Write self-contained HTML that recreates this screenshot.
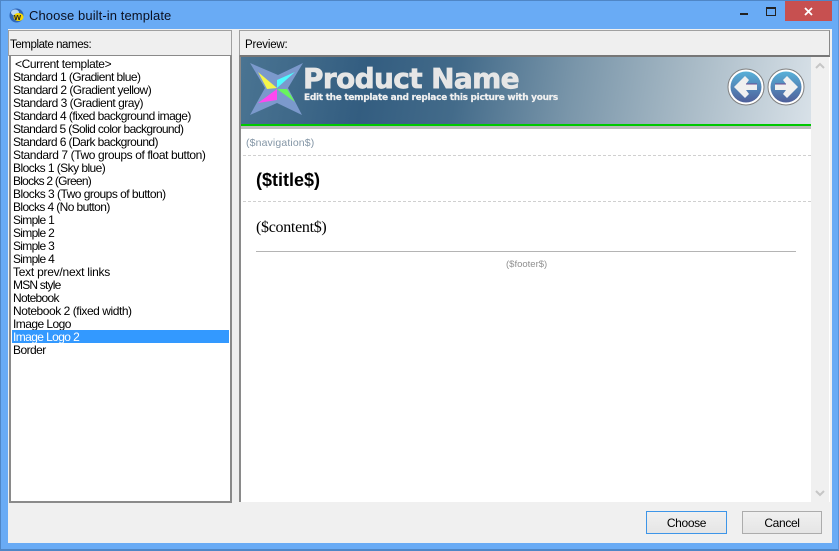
<!DOCTYPE html>
<html><head><meta charset="utf-8"><style>
html,body{margin:0;padding:0}
body{width:839px;height:551px;position:relative;overflow:hidden;background:#69abf5;font-family:"Liberation Sans",sans-serif;font-size:12px;color:#000}
div{position:absolute;box-sizing:border-box}
.t{white-space:nowrap}
#win{left:0;top:0;width:839px;height:551px;border:1px solid #4f86c6;border-bottom:2px solid #4f86c6;border-right:1px solid #5a94d8}
#list div{left:1px;width:217px;height:13px;line-height:13px;padding-left:1px;white-space:nowrap;letter-spacing:-.45px}
.btn{top:511px;height:23px;text-align:center;line-height:22px;background:linear-gradient(#f0f0f0,#e5e5e5);border:1px solid #acacac;letter-spacing:-.35px}
</style></head><body>
<div id="win"></div>
<svg style="position:absolute;left:9px;top:8px" width="15" height="15" viewBox="0 0 15 15"><circle cx="7.5" cy="7.5" r="7" fill="#2f66b8"/><ellipse cx="6" cy="4.5" rx="4" ry="3" fill="#bcd8f2"/><ellipse cx="9.5" cy="9" rx="5" ry="4" fill="#f6d800"/><text x="5" y="12" font-size="9" font-weight="bold" font-family="Liberation Sans" fill="#222">w</text></svg>
<div class="t" style="left:29px;top:8px;font-size:13px;line-height:15px;color:#0b1020;letter-spacing:.09px">Choose built-in template</div>
<div style="left:740px;top:13px;width:8px;height:2px;background:#222"></div>
<div style="left:766px;top:7px;width:10px;height:9px;border:1px solid #222;border-top:2px solid #222"></div>
<div style="left:785px;top:1px;width:47px;height:20px;background:#c75050"></div>
<svg style="position:absolute;left:804px;top:7px" width="9" height="9" viewBox="0 0 9 9"><path d="M1 1L8 8M8 1L1 8" stroke="#fff" stroke-width="1.8"/></svg>
<div style="left:8px;top:29px;width:824px;height:514px;background:#f0f0f0"></div>

<div style="left:8px;top:30px;width:224px;height:26px;background:#efefef;border:1px solid #a0a0a0;border-bottom:0"></div>
<div class="t" style="left:10px;top:39px;line-height:13px;font-size:11.5px;letter-spacing:-.42px">Template names:</div>
<div id="list" style="left:9px;top:55px;width:223px;height:448px;background:#fff;border:2px solid #8a8a8a;border-width:1px 2px 2px 2px;overflow:hidden">
<div style="top:2px;padding-left:3px;letter-spacing:-.4px">&lt;Current template&gt;</div>
<div style="top:15px;letter-spacing:-.565px">Standard 1 (Gradient blue)</div>
<div style="top:28px;letter-spacing:-.52px">Standard 2 (Gradient yellow)</div>
<div style="top:41px;letter-spacing:-.49px">Standard 3 (Gradient gray)</div>
<div style="top:54px;letter-spacing:-.56px">Standard 4 (fixed background image)</div>
<div style="top:67px;letter-spacing:-.62px">Standard 5 (Solid color background)</div>
<div style="top:80px;letter-spacing:-.59px">Standard 6 (Dark background)</div>
<div style="top:93px;letter-spacing:-.4px">Standard 7 (Two groups of float button)</div>
<div style="top:106px;letter-spacing:-.55px">Blocks 1 (Sky blue)</div>
<div style="top:119px;letter-spacing:-.75px">Blocks 2 (Green)</div>
<div style="top:132px;letter-spacing:-.52px">Blocks 3 (Two groups of button)</div>
<div style="top:145px;letter-spacing:-.6px">Blocks 4 (No button)</div>
<div style="top:158px;letter-spacing:-.7px">Simple 1</div>
<div style="top:171px;letter-spacing:-.7px">Simple 2</div>
<div style="top:184px;letter-spacing:-.7px">Simple 3</div>
<div style="top:197px;letter-spacing:-.7px">Simple 4</div>
<div style="top:210px;letter-spacing:-.25px">Text prev/next links</div>
<div style="top:223px;letter-spacing:-.8px">MSN style</div>
<div style="top:236px;letter-spacing:-.7px">Notebook</div>
<div style="top:249px">Notebook 2 (fixed width)</div>
<div style="top:262px;letter-spacing:-.55px">Image Logo</div>
<div style="top:274px;height:13px;line-height:15px;background:#3399ff;color:#fff;letter-spacing:-.6px">Image Logo 2</div>
<div style="top:288px;letter-spacing:-.55px">Border</div>
</div>

<div style="left:239px;top:30px;width:591px;height:26px;background:#efefef;border:1px solid #a0a0a0;border-bottom:1px solid #777;border-right:1px solid #888"></div>
<div class="t" style="left:245px;top:39px;line-height:13px;font-size:11.5px;letter-spacing:-.2px">Preview:</div>
<div style="left:239px;top:56px;width:591px;height:446px;background:#fff;border-left:2px solid #8a8a8a;border-top:1px solid #777"></div>
<div style="left:241px;top:57px;width:570px;height:67px;background:linear-gradient(100deg,#4a7492 0%,#335d80 22%,#436b8a 38%,#7a96aa 58%,#a8bac6 78%,#d8e1e8 100%)"></div>
<div style="left:241px;top:124px;width:570px;height:2px;background:#00c800"></div>
<div style="left:241px;top:126px;width:570px;height:3px;background:#bcbcbc"></div>
<svg style="position:absolute;left:250px;top:62px" width="54" height="54" viewBox="0 0 54 54"><path d="M0 1L28 13L53 1L38 26L52 53L27 41L0 53L15 26Z" fill="#7b99cc"/><path d="M8 10L27 26L17 27Z" fill="#f5f54a"/><path d="M45 10L27 18V26Z" fill="#4dfbff"/><path d="M45 40L27 27H37Z" fill="#68f55d"/><path d="M8 41L27 27V38Z" fill="#ff48f0"/></svg>
<div class="t" style="left:303px;top:62px;font-size:28px;font-weight:bold;line-height:33px;color:#e6e6e6;font-family:'DejaVu Sans',sans-serif;letter-spacing:-.65px;-webkit-text-stroke:.7px #e6e6e6">Product Name</div>
<div class="t" style="left:304px;top:92px;font-size:9px;font-weight:bold;line-height:13px;color:#f0f0f0;font-family:'DejaVu Sans',sans-serif;letter-spacing:-.3px;-webkit-text-stroke:.2px #f0f0f0">Edit the template and replace this picture with yours</div>
<svg style="position:absolute;left:727px;top:68px" width="79" height="38" viewBox="0 0 79 38">
<defs><linearGradient id="g" x1="0" y1="0" x2="0" y2="1"><stop offset="0" stop-color="#58b0d8"/><stop offset="1" stop-color="#4f5f9a"/></linearGradient></defs>
<circle cx="19" cy="19" r="18" fill="#fff" stroke="#808080"/><circle cx="19" cy="19" r="15.5" fill="url(#g)"/>
<circle cx="59" cy="19" r="18" fill="#fff" stroke="#808080"/><circle cx="59" cy="19" r="15.5" fill="url(#g)"/>
<path d="M7 19L18 8L22 12L19 16H30V22H19L22 26L18 30Z" fill="#f0f0f0"/><path d="M19 16H30" stroke="#6a4a90"/>
<path d="M71 19L60 8L56 12L59 16H48V22H59L56 26L60 30Z" fill="#f0f0f0"/><path d="M48 16H59" stroke="#6a4a90"/>
</svg>
<div style="left:811px;top:57px;width:18px;height:445px;background:#f0f0f0"></div>
<svg style="position:absolute;left:815px;top:62px" width="10" height="8" viewBox="0 0 10 8"><path d="M1 6L5 2L9 6" fill="none" stroke="#c6c6c6" stroke-width="2"/></svg>
<svg style="position:absolute;left:815px;top:489px" width="10" height="8" viewBox="0 0 10 8"><path d="M1 2L5 6L9 2" fill="none" stroke="#c6c6c6" stroke-width="2"/></svg>

<div class="t" style="left:246px;top:137px;font-size:10.5px;line-height:13px;color:#8496a6;letter-spacing:.13px">($navigation$)</div>
<div style="left:243px;top:155px;width:568px;height:1px;border-top:1px dashed #d0d0d0"></div>
<div class="t" style="left:256px;top:170px;font-size:18px;font-weight:bold;line-height:21px">($title$)</div>
<div style="left:243px;top:201px;width:568px;height:1px;border-top:1px dashed #d0d0d0"></div>
<div class="t" style="left:256px;top:219px;font-size:16px;line-height:18px;font-family:'Liberation Serif',serif;letter-spacing:-.3px">($content$)</div>
<div style="left:256px;top:251px;width:540px;height:1px;background:#b4b4b4"></div>
<div class="t" style="left:506px;top:258px;font-size:9.5px;line-height:13px;color:#909090">($footer$)</div>

<div class="btn" style="left:646px;width:81px;border-color:#3d95e8">Choose</div>
<div class="btn" style="left:742px;width:80px">Cancel</div>
</body></html>
